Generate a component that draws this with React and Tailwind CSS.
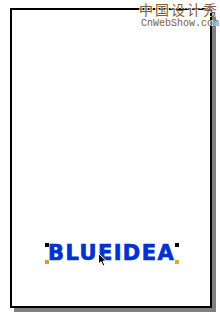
import React from 'react';

const Handle = ({ className }) => (
  <span className={`absolute w-[4px] h-[4px] ${className}`} />
);

const Cursor = () => (
  <svg className="absolute left-[51px] top-[8px]" width="10" height="14" viewBox="0 0 10 14">
    <path d="M0.5 0.5 L0.5 11 L3 8.6 L5 13 L6.8 12.2 L4.9 8 L8.4 8 Z" fill="#000" stroke="#fff" strokeWidth="1" />
  </svg>
);

export default function App() {
  return (
    <div className="relative w-[220px] h-[318px] bg-white pt-[8px] pl-[10px] overflow-hidden">
      {/* page frame */}
      <div className="w-[202px] h-[300px] border-2 border-black bg-white shadow-[4px_4px_0_#808080] pt-[232px] pl-[35px]">
        <div className="relative inline-block h-[17px] pl-[1px] pr-[2px]">
          <span className="block text-[21px] leading-[17px] font-bold tracking-[1.4px] text-[#0033cc] [-webkit-text-stroke:0.7px_#0033cc] [font-family:'DejaVu_Sans',sans-serif]">
            BLUEIDEA
          </span>
          <Handle className="-left-[2px] -top-[2px] bg-black" />
          <Handle className="-right-[2px] -top-[2px] bg-black" />
          <Handle className="-left-[2px] -bottom-[2px] bg-[#d99a2b]" />
          <Handle className="-right-[2px] -bottom-[2px] bg-[#e0a83a]" />
          <Cursor />
        </div>
      </div>

      {/* watermark */}
      <div className="absolute left-[139px] top-[1px] flex flex-col items-end text-[#806034] [text-shadow:1px_0_0_#fff,-1px_0_0_#fff]">
        <span className="text-[14px] leading-[17px] tracking-[2px] [font-family:'Noto_Sans_CJK_SC',sans-serif]">中国设计秀</span>
        <span className="text-[10px] leading-[11px] [font-family:'Liberation_Mono',monospace]">CnWebShow.com</span>
      </div>
    </div>
  );
}
